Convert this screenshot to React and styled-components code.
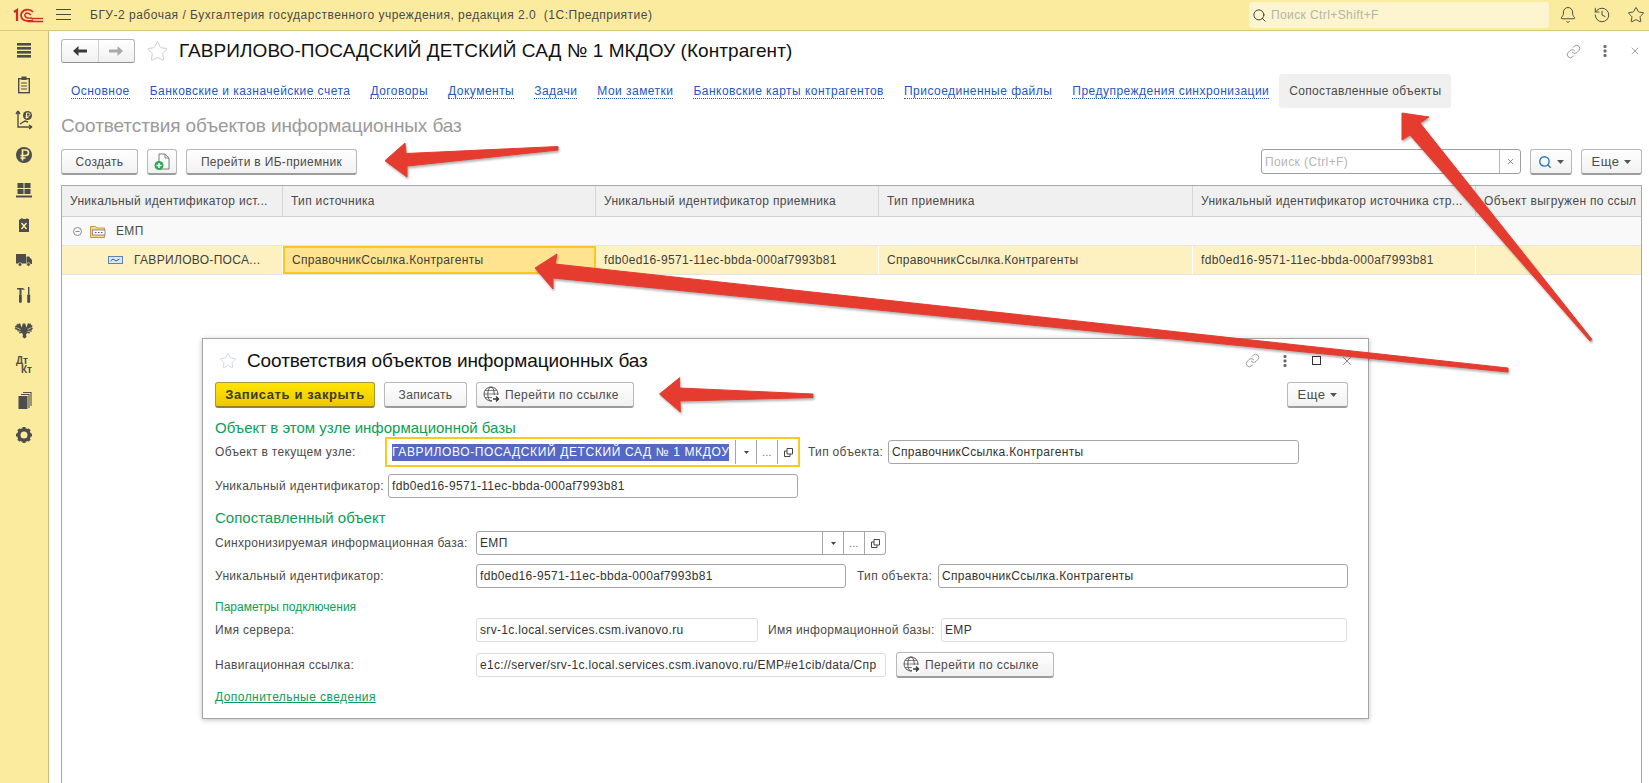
import React from 'react';
import styled, { createGlobalStyle } from 'styled-components';
import { Bell, History, Star, Link as LinkIcon, X, Search } from 'lucide-react';

const GlobalStyle = createGlobalStyle`
  html, body, #root { margin: 0; height: 100%; }
  body {
    font-family: "Liberation Sans", Arial, sans-serif;
    font-size: 12px;
    letter-spacing: 0.32px;
    color: #4b4b4b;
    background: #fff;
    overflow: hidden;
  }
  * { box-sizing: border-box; }
`;

const tabs = [
  'Основное',
  'Банковские и казначейские счета',
  'Договоры',
  'Документы',
  'Задачи',
  'Мои заметки',
  'Банковские карты контрагентов',
  'Присоединенные файлы',
  'Предупреждения синхронизации',
];

const Logo = () => (
  <svg width="30" height="15" viewBox="0 0 30 15" fill="none" stroke="#d6262b">
    <path d="M1 4 L4 2 V13" strokeWidth="2.2" />
    <path d="M20 4 C17 0.5 9 0.5 8 7 C8 13 15 14 20 12" strokeWidth="1.8" />
    <path d="M18 7 C14 3 11 6 12 8 C13 11 17 10 19 10" strokeWidth="1.4" />
    <path d="M15 13.5 H30" strokeWidth="1.6" />
    <path d="M19 10.5 H30" strokeWidth="1.4" />
  </svg>
);

const Burger = () => (
  <svg width="15" height="12" viewBox="0 0 15 12" stroke="#4a4a4a" strokeWidth="1">
    <path d="M0 .5H15M0 5.5H15M0 10.5H15" />
  </svg>
);

const SideIcon = ({ children }) => (
  <svg width="24" height="24" viewBox="0 0 24 24" fill="#4d4d4d" stroke="none">{children}</svg>
);

const DtKtIcon = () => <DtKt><span>Дт</span><span>Кт</span></DtKt>;

const sideIcons = [
  <SideIcon key="menu">
    <rect x="5" y="5" width="14" height="2.6" /><rect x="5" y="9" width="14" height="2.6" />
    <rect x="5" y="13" width="14" height="2.6" /><rect x="5" y="17" width="14" height="2.6" />
  </SideIcon>,
  <SideIcon key="clip">
    <rect x="6.7" y="5.7" width="10.6" height="14" fill="none" stroke="#4d4d4d" strokeWidth="1.4" />
    <rect x="9.5" y="3.5" width="5" height="3.5" />
    <path d="M9 10h6M9 13h6M9 16h6" stroke="#4d4d4d" strokeWidth="1.2" />
  </SideIcon>,
  <SideIcon key="chart">
    <path d="M6 3v16h14M6 3l-2 3M6 3l2 3M20 19l-3-2M20 19l-3 2M8 16l5-3 3 1" fill="none" stroke="#4d4d4d" strokeWidth="1.4" />
    <circle cx="15.5" cy="7.5" r="4.5" />
    <path d="M14.5 10.5V5h2a1.5 1.5 0 0 1 0 3h-3M13.5 9.500h3" fill="none" stroke="#fbec9f" strokeWidth="1" />
  </SideIcon>,
  <SideIcon key="rub">
    <circle cx="12" cy="12" r="8" />
    <path d="M10.5 17.5V7h3.2a2.7 2.7 0 0 1 0 5.5H8.5M8.5 15h5" fill="none" stroke="#fbec9f" strokeWidth="1.7" />
  </SideIcon>,
  <SideIcon key="grid">
    <rect x="5.5" y="5" width="6" height="5" /><rect x="12.5" y="5" width="6" height="5" />
    <rect x="5.5" y="11" width="6" height="5" /><rect x="12.5" y="11" width="6" height="5" />
    <rect x="4" y="17.5" width="16" height="2" />
  </SideIcon>,
  <SideIcon key="can">
    <path d="M7 7l3-2 1 1h3l1-1 1 1h1v13H7z" />
    <path d="M9.5 10l5 6M14.5 10l-5 6" stroke="#fbec9f" strokeWidth="1.5" />
  </SideIcon>,
  <SideIcon key="truck">
    <rect x="4" y="6" width="10" height="9.5" />
    <path d="M14.5 8.5h2.500l3 3.500v4h-5.500z" />
    <circle cx="8" cy="16.5" r="1.8" stroke="#fbec9f" strokeWidth=".6" />
    <circle cx="16.5" cy="16.5" r="1.8" stroke="#fbec9f" strokeWidth=".6" />
  </SideIcon>,
  <SideIcon key="tools">
    <path d="M5 5h6l2 2-3-.5H9.5V11h-2V6.5H5z" />
    <rect x="7" y="11" width="2.8" height="9" rx="1.4" />
    <rect x="16" y="4" width="1.4" height="7" />
    <rect x="15.2" y="11" width="3" height="9" rx="1.5" />
  </SideIcon>,
  <SideIcon key="eagle">
    <path d="M11 5l1 1 1-1 1.5 4.5L16 5l1.5 1 1-1 .5 2 1.5.5-.5 2 1 1-1.500 1.500.5 1.500-2 .5-.5 1.500-2.500-.5-1 2 .5 2-2 1.500-2-1.500.5-2-1-2-2.500.5-.5-1.500-2-.5.5-1.500L2.500 11l1-1-.5-2 1.500-.5.5-2 1 1L8 5l1.500 4.500z" />
    <path d="M4.5 9.5l4 2M4.5 13l4 .5M19.5 9.5l-4 2M19.5 13l-4 .5" stroke="#fbec9f" strokeWidth=".7" />
  </SideIcon>,
  <DtKtIcon key="dtkt" />,
  <SideIcon key="docs">
    <rect x="6.5" y="8" width="9" height="13" />
    <path d="M17 20V6.5H9M19 18V4.500H11" fill="none" stroke="#4d4d4d" strokeWidth="1.1" />
  </SideIcon>,
  <SideIcon key="gear">
    <circle cx="12" cy="12" r="5.2" fill="none" stroke="#4d4d4d" strokeWidth="3.4" />
    {[0, 45, 90, 135, 180, 225, 270, 315].map((a) => (
      <rect key={a} x="10.5" y="4" width="3" height="3" transform={`rotate(${a} 12 12)`} />
    ))}
  </SideIcon>,
];

const DotsIcon = () => (
  <svg width="4" height="12" viewBox="0 0 4 12" fill="#6b6b6b">
    <rect x=".5" y="0" width="3" height="3" rx="1" /><rect x=".5" y="4.5" width="3" height="3" rx="1" /><rect x=".5" y="9" width="3" height="3" rx="1" />
  </svg>
);

const ArrowIcon = ({ color, flip }) => (
  <svg width="14" height="10" viewBox="0 0 14 10" fill={color}>
    <path d={flip ? 'M14 5L8.500 0v3.500H0v3h8.500V10z' : 'M0 5l5.500-5v3.500H14v3H5.500V10z'} />
  </svg>
);

const AddDoc = () => (
  <svg width="16" height="18" viewBox="0 0 16 18">
    <path d="M5 1h6l4 4v11H5z" fill="#fff" stroke="#7d7d7d" />
    <path d="M11 1v4h4" fill="none" stroke="#7d7d7d" />
    <circle cx="5" cy="12.5" r="4.5" fill="#2fa84f" />
    <path d="M2.5 12.5h5M5 10v5" stroke="#fff" strokeWidth="1.4" />
  </svg>
);

const GlobeIcon = () => (
  <svg width="17" height="17" viewBox="0 0 17 17" fill="none" stroke="#555">
    <circle cx="8" cy="8" r="7" />
    <ellipse cx="8" cy="8" rx="3.2" ry="7" />
    <path d="M1 8h14M2 4.5h12M2 11.5h12" strokeWidth=".7" />
    <rect x="9" y="9" width="8" height="8" fill="#fff" stroke="none" />
    <path d="M10 13h5M13 10.5L15.5 13 13 15.5" strokeWidth="1.4" stroke="#333" />
  </svg>
);

const Caret = () => (
  <svg width="7" height="4" viewBox="0 0 7 4" fill="#555"><path d="M0 0h7L3.5 4z" /></svg>
);

const SmallCaret = () => (
  <svg width="5" height="3" viewBox="0 0 5 3" fill="#444"><path d="M0 0h5L2.5 3z" /></svg>
);

const CopyIcon = () => (
  <svg width="9" height="9" viewBox="0 0 9 9" fill="none" stroke="#444">
    <path d="M3 .5h5.500V6H3zM3 3H.5v5.500H6V6" />
  </svg>
);

const FolderIcon = () => (
  <svg width="16" height="13" viewBox="0 0 16 13">
    <path d="M.5 3V1.5h5l1.500 1.500h7.500v9.500H.5z" fill="#f7d98c" stroke="#c99a3c" />
    <rect x="2.5" y="5" width="12.5" height="5" fill="#fff" stroke="#777" strokeWidth=".8" />
    <path d="M5 7.5h1.500M8 7.5h1.500M11 7.5h1.500" stroke="#555" />
  </svg>
);

const RowIcon = () => (
  <svg width="15" height="8" viewBox="0 0 15 8" fill="none">
    <rect x=".5" y=".5" width="14" height="7" fill="#d9e6f5" stroke="#5d82ad" />
    <path d="M2.5 5l2.500-2 3 2 3.500-2" stroke="#3a5f8a" />
  </svg>
);

const CollapseIcon = () => (
  <svg width="9" height="9" viewBox="0 0 9 9" fill="none" stroke="#8a8a8a">
    <circle cx="4.5" cy="4.5" r="4" /><path d="M2.5 4.5h4" />
  </svg>
);

const ComboControls = () => (
  <>
    <ComboBtn><SmallCaret /></ComboBtn>
    <ComboBtn><DotsText>...</DotsText></ComboBtn>
    <ComboBtn><CopyIcon /></ComboBtn>
  </>
);

const App = () => (
  <Page>
    <GlobalStyle />
    <TopBar>
      <LogoBox><Logo /></LogoBox>
      <BurgerBox><Burger /></BurgerBox>
      <AppTitle>БГУ-2 рабочая / Бухгалтерия государственного учреждения, редакция 2.0  (1С:Предприятие)</AppTitle>
      <TopSearch>
        <Search size={15} color="#333" strokeWidth={1.5} />
        <TopSearchText>Поиск Ctrl+Shift+F</TopSearchText>
      </TopSearch>
      <TopIcons>
        <Bell size={18} color="#4a4a4a" strokeWidth={1.3} />
        <History size={18} color="#4a4a4a" strokeWidth={1.3} />
        <Star size={18} color="#4a4a4a" strokeWidth={1.3} />
      </TopIcons>
    </TopBar>

    <Body>
      <SideBar>
        {sideIcons.map((icon) => <SideItem key={icon.key}>{icon}</SideItem>)}
      </SideBar>

      <Main>
        <HeadRow>
          <NavGroup>
            <NavBtn><ArrowIcon color="#3a3a3a" /></NavBtn>
            <NavBtn><ArrowIcon color="#a9a9a9" flip /></NavBtn>
          </NavGroup>
          <BigStar><Star size={23} color="#c6ccd3" strokeWidth={1} /></BigStar>
          <PageTitle>ГАВРИЛОВО-ПОСАДСКИЙ ДЕТСКИЙ САД № 1 МКДОУ (Контрагент)</PageTitle>
          <HeadIcons>
            <LinkIcon size={15} color="#777" strokeWidth={1.2} />
            <DotsIcon />
            <X size={12} color="#777" strokeWidth={1.3} />
          </HeadIcons>
        </HeadRow>

        <Tabs>
          {tabs.map((t) => <Tab key={t}><TabLink>{t}</TabLink></Tab>)}
          <ActiveTab>Сопоставленные объекты</ActiveTab>
        </Tabs>

        <SectionTitle>Соответствия объектов информационных баз</SectionTitle>

        <Toolbar>
          <Button $w={77}>Создать</Button>
          <Button $w={30}><AddDoc /></Button>
          <Button $w={171}>Перейти в ИБ-приемник</Button>
          <SearchBox>
            <SearchPlaceholder>Поиск (Ctrl+F)</SearchPlaceholder>
            <SearchClear><X size={9} color="#555" strokeWidth={1.8} /></SearchClear>
          </SearchBox>
          <Button $w={42}><Search size={14} color="#2b78b8" strokeWidth={2.4} /><Caret /></Button>
          <Button $w={61}><MoreText>Еще</MoreText><Caret /></Button>
        </Toolbar>

        <Table>
          <HeaderRow>
            <HeadCell>Уникальный идентификатор ист...</HeadCell>
            <HeadCell>Тип источника</HeadCell>
            <HeadCell>Уникальный идентификатор приемника</HeadCell>
            <HeadCell>Тип приемника</HeadCell>
            <HeadCell>Уникальный идентификатор источника стр...</HeadCell>
            <HeadCell>Объект выгружен по ссыл</HeadCell>
          </HeaderRow>
          <GroupRow>
            <CollapseIcon />
            <FolderIcon />
            <span>ЕМП</span>
          </GroupRow>
          <DataRow>
            <Cell $indent><RowIcon /><span>ГАВРИЛОВО-ПОСА...</span></Cell>
            <FocusCell>СправочникСсылка.Контрагенты</FocusCell>
            <Cell>fdb0ed16-9571-11ec-bbda-000af7993b81</Cell>
            <Cell>СправочникСсылка.Контрагенты</Cell>
            <Cell>fdb0ed16-9571-11ec-bbda-000af7993b81</Cell>
            <Cell />
          </DataRow>
        </Table>
      </Main>
    </Body>

    <Dialog>
      <DialogHead>
        <Star size={18} color="#c6ccd3" strokeWidth={1} />
        <DialogTitle>Соответствия объектов информационных баз</DialogTitle>
        <DialogIcons>
          <LinkIcon size={15} color="#777" strokeWidth={1.2} />
          <DotsIcon />
          <MaxBox />
          <X size={14} color="#555" strokeWidth={1.2} />
        </DialogIcons>
      </DialogHead>
      <DialogBar>
        <PrimaryButton>Записать и закрыть</PrimaryButton>
        <Button $w={83}>Записать</Button>
        <LinkButton><GlobeIcon />Перейти по ссылке</LinkButton>
        <Spring />
        <Button $w={61}><MoreText>Еще</MoreText><Caret /></Button>
      </DialogBar>

      <GroupTitle $mt={10}>Объект в этом узле информационной базы</GroupTitle>
      <FormRow $h={30}>
        <Label $w={170}>Объект в текущем узле:</Label>
        <FocusField>
          <SelectedWrap><Selected>ГАВРИЛОВО-ПОСАДСКИЙ ДЕТСКИЙ САД № 1 МКДОУ</Selected></SelectedWrap>
          <ComboControls />
        </FocusField>
        <Label $w={80} $ml={8}>Тип объекта:</Label>
        <Field $w={411}>СправочникСсылка.Контрагенты</Field>
      </FormRow>
      <FormRow $mt={7}>
        <Label $w={173}>Уникальный идентификатор:</Label>
        <Field $w={410}>fdb0ed16-9571-11ec-bbda-000af7993b81</Field>
      </FormRow>

      <GroupTitle $mt={10} $h={20}>Сопоставленный объект</GroupTitle>
      <FormRow $mt={3}>
        <Label $w={261}>Синхронизируемая информационная база:</Label>
        <Field $w={410} $combo>
          <ComboText>ЕМП</ComboText>
          <ComboControls />
        </Field>
      </FormRow>
      <FormRow $mt={9}>
        <Label $w={261}>Уникальный идентификатор:</Label>
        <Field $w={370}>fdb0ed16-9571-11ec-bbda-000af7993b81</Field>
        <Label $w={81} $ml={11}>Тип объекта:</Label>
        <Field $w={410}>СправочникСсылка.Контрагенты</Field>
      </FormRow>

      <SubTitle>Параметры подключения</SubTitle>
      <FormRow $mt={1}>
        <Label $w={261}>Имя сервера:</Label>
        <Field $w={282} $light>srv-1c.local.services.csm.ivanovo.ru</Field>
        <Label $w={173} $ml={10}>Имя информационной базы:</Label>
        <Field $w={406} $light>EMP</Field>
      </FormRow>
      <FormRow $mt={11}>
        <Label $w={261}>Навигационная ссылка:</Label>
        <Field $w={410} $light>e1c://server/srv-1c.local.services.csm.ivanovo.ru/EMP#e1cib/data/Спр</Field>
        <LinkButton $ml={10}><GlobeIcon />Перейти по ссылке</LinkButton>
      </FormRow>
      <MoreLink>Дополнительные сведения</MoreLink>
    </Dialog>

    <Arrows width="1649" height="783" viewBox="0 0 1649 783">
      <polygon points="385,160.7 405,143 406,153.5 558,146.5 558,150 407,166 407,177" />
      <polygon points="1402,113 1429,117 1420,123 1592,339.5 1590,341 1410,135 1402,140" />
      <polygon points="535,268 557,254 555,264 1508,368 1508,372 553,278 553,289" />
      <polygon points="659.5,394 679.6,377.7 679.6,388 813,394 813,397.5 680,401 680.4,412" />
    </Arrows>
  </Page>
);

const Page = styled.div`
  position: relative;
  width: 1649px;
  height: 783px;
  display: flex;
  flex-direction: column;
  overflow: hidden;
`;

const TopBar = styled.div`
  height: 31px;
  flex: none;
  display: flex;
  align-items: center;
  background: #fbeb9e;
  border-bottom: 1px solid #d8c878;
`;

const LogoBox = styled.div`
  margin-left: 13px;
  width: 43px;
  display: flex;
`;

const BurgerBox = styled.div`
  width: 34px;
  display: flex;
`;

const AppTitle = styled.div`
  width: 1159px;
  color: #4a4a4a;
  letter-spacing: 0.5px;
  white-space: pre;
`;

const TopSearch = styled.div`
  width: 300px;
  height: 26px;
  padding-left: 3px;
  display: flex;
  align-items: center;
  gap: 4px;
  background: #fdf5cf;
  border-radius: 3px;
`;

const TopSearchText = styled.span`
  color: #b4b3a6;
  letter-spacing: 0.4px;
`;

const TopIcons = styled.div`
  margin-left: 10px;
  display: flex;
  gap: 16px;
`;

const Body = styled.div`
  flex: 1;
  display: flex;
  min-height: 0;
`;

const SideBar = styled.div`
  width: 49px;
  flex: none;
  padding-top: 1px;
  display: flex;
  flex-direction: column;
  background: #fbeb9e;
  border-right: 1px solid #cdbd7c;
`;

const SideItem = styled.div`
  height: 35px;
  flex: none;
  display: flex;
  align-items: center;
  justify-content: center;
`;

const DtKt = styled.div`
  display: flex;
  flex-direction: column;
  font-size: 10px;
  font-weight: 700;
  line-height: 9px;
  letter-spacing: 0;
  color: #4d4d4d;
  span:last-child { margin-left: 5px; }
`;

const Main = styled.div`
  flex: 1;
  min-width: 0;
  padding: 8px 7px 0 12px;
  display: flex;
  flex-direction: column;
`;

const HeadRow = styled.div`
  height: 24px;
  flex: none;
  display: flex;
  align-items: center;
`;

const NavGroup = styled.div`
  width: 74px;
  height: 24px;
  display: flex;
  background: linear-gradient(#ffffff, #f0f0f0);
  border: 1px solid #b5b5b5;
  border-bottom-color: #8f8f8f;
  border-radius: 3px;
`;

const NavBtn = styled.div`
  flex: 1;
  display: flex;
  align-items: center;
  justify-content: center;
  & + & { border-left: 1px solid #cfcfcf; }
`;

const BigStar = styled.div`
  margin-left: 11px;
  width: 33px;
  display: flex;
`;

const PageTitle = styled.div`
  font-size: 19px;
  letter-spacing: 0.07px;
  color: #111;
  white-space: nowrap;
`;

const HeadIcons = styled.div`
  margin-left: auto;
  margin-right: 1px;
  display: flex;
  align-items: center;
  gap: 22px;
`;

const Tabs = styled.div`
  height: 34px;
  margin-top: 11px;
  flex: none;
  display: flex;
`;

const Tab = styled.div`
  padding: 0 10px;
  display: flex;
  align-items: center;
  white-space: nowrap;
`;

const TabLink = styled.span`
  color: #2457c5;
  border-bottom: 1px dotted #2457c5;
  line-height: 14px;
  letter-spacing: 0.47px;
`;

const ActiveTab = styled(Tab)`
  background: #f0f0f0;
  border-radius: 3px;
  color: #4b4b4b;
`;

const SectionTitle = styled.div`
  height: 22px;
  margin-top: 7px;
  flex: none;
  font-size: 19px;
  letter-spacing: -0.1px;
  line-height: 22px;
  color: #9a9a9a;
  white-space: nowrap;
`;

const Toolbar = styled.div`
  height: 26px;
  margin-top: 12px;
  flex: none;
  display: flex;
  gap: 9px;
`;

const Button = styled.div`
  width: ${(p) => p.$w}px;
  height: 26px;
  flex: none;
  display: flex;
  align-items: center;
  justify-content: center;
  gap: 5px;
  background: linear-gradient(#ffffff, #f1f1f1);
  border: 1px solid #b9b9b9;
  border-bottom: 2px solid #9c9c9c;
  border-radius: 3px;
  color: #4b4b4b;
  white-space: nowrap;
`;

const LinkButton = styled(Button)`
  width: 158px;
  margin-left: ${(p) => p.$ml || 0}px;
  padding-left: 6px;
  justify-content: flex-start;
  letter-spacing: 0.4px;
`;

const MoreText = styled.span`
  font-size: 13px;
  letter-spacing: 0.5px;
`;

const PrimaryButton = styled(Button)`
  width: 160px;
  background: linear-gradient(#ffe600, #efc800);
  border-color: #a89a3c;
  border-bottom-color: #8f8230;
  color: #3c3c1e;
  font-size: 13px;
  font-weight: 700;
  letter-spacing: 0.6px;
`;

const SearchBox = styled.div`
  width: 260px;
  height: 25px;
  margin-left: auto;
  display: flex;
  background: #fff;
  border: 1px solid #9f9f9f;
  border-radius: 3px;
`;

const SearchPlaceholder = styled.div`
  flex: 1;
  padding-left: 3px;
  display: flex;
  align-items: center;
  color: #b5b5b5;
  letter-spacing: 0.4px;
`;

const SearchClear = styled.div`
  width: 21px;
  display: flex;
  align-items: center;
  justify-content: center;
  border-left: 1px solid #b5b5b5;
`;

const Table = styled.div`
  flex: 1;
  margin-top: 10px;
  border: 1px solid #a8a8a8;
  border-bottom: none;
  overflow: hidden;
`;

const columns = '221px 313px 283px 314px 283px 1fr';

const HeaderRow = styled.div`
  height: 31px;
  display: grid;
  grid-template-columns: ${columns};
  background: #f0f0f0;
  border-bottom: 1px solid #d0d0d0;
`;

const HeadCell = styled.div`
  padding-left: 8px;
  display: flex;
  align-items: center;
  overflow: hidden;
  white-space: nowrap;
  border-right: 1px solid #d6d6d6;
  &:last-child { border-right: none; }
`;

const GroupRow = styled.div`
  height: 29px;
  padding-left: 11px;
  display: flex;
  align-items: center;
  gap: 8px;
  background: #f9f9f9;
  border-bottom: 1px solid #e4e4e4;
  span { margin-left: 2px; }
`;

const DataRow = styled.div`
  height: 29px;
  display: grid;
  grid-template-columns: ${columns};
  background: #fdf1c1;
  border-bottom: 1px solid #e4e4e4;
`;

const Cell = styled.div`
  padding-left: ${(p) => (p.$indent ? 46 : 8)}px;
  display: flex;
  align-items: center;
  gap: 11px;
  color: #3f3f3f;
  white-space: nowrap;
  overflow: hidden;
  border-right: 1px solid #fff;
  &:last-child { border-right: none; }
`;

const FocusCell = styled(Cell)`
  padding-left: 7px;
  background: #ffe38e;
  border: 2px solid #fcc820;
`;

const Dialog = styled.div`
  position: absolute;
  left: 202px;
  top: 338px;
  width: 1167px;
  height: 381px;
  padding: 0 20px 0 12px;
  background: #fff;
  border: 1px solid #a5a5a5;
  box-shadow: 0 1px 5px rgba(0, 0, 0, 0.25);
`;

const DialogHead = styled.div`
  height: 43px;
  padding-left: 4px;
  display: flex;
  align-items: center;
`;

const DialogTitle = styled.div`
  margin-left: 10px;
  font-size: 19px;
  letter-spacing: -0.1px;
  color: #111;
  white-space: nowrap;
`;

const DialogIcons = styled.div`
  margin-left: auto;
  margin-right: -6px;
  display: flex;
  align-items: center;
  gap: 19px;
  svg:nth-child(2) { margin-left: 4px; }
`;

const MaxBox = styled.div`
  width: 9px;
  height: 9px;
  margin-left: 6px;
  border: 1px solid #333;
`;

const DialogBar = styled.div`
  height: 26px;
  display: flex;
  gap: 9px;
`;

const Spring = styled.div`
  flex: 1;
`;

const GroupTitle = styled.div`
  height: ${(p) => p.$h || 19}px;
  margin-top: ${(p) => p.$mt}px;
  font-size: 15px;
  line-height: 19px;
  letter-spacing: 0;
  color: #0aa055;
  white-space: nowrap;
`;

const SubTitle = styled.div`
  height: 20px;
  margin-top: 9px;
  line-height: 20px;
  letter-spacing: 0;
  color: #0aa055;
`;

const FormRow = styled.div`
  height: ${(p) => p.$h || 24}px;
  margin-top: ${(p) => p.$mt || 0}px;
  display: flex;
  align-items: center;
`;

const Label = styled.div`
  width: ${(p) => p.$w}px;
  margin-left: ${(p) => p.$ml || 0}px;
  flex: none;
  color: #4b4b4b;
  white-space: nowrap;
`;

const Field = styled.div`
  width: ${(p) => p.$w}px;
  height: 24px;
  flex: none;
  padding-left: ${(p) => (p.$combo ? 0 : 3)}px;
  display: flex;
  align-items: center;
  background: #fff;
  border: 1px solid ${(p) => (p.$light ? '#dcdcdc' : '#a6a6a6')};
  border-radius: 3px;
  color: #333;
  white-space: nowrap;
  overflow: hidden;
`;

const ComboText = styled.div`
  flex: 1;
  padding-left: 3px;
`;

const ComboBtn = styled.div`
  width: 21px;
  height: 100%;
  flex: none;
  display: flex;
  align-items: center;
  justify-content: center;
  border-left: 1px solid #a6a6a6;
`;

const DotsText = styled.span`
  color: #666;
  font-size: 10px;
`;

const FocusField = styled.div`
  width: 415px;
  height: 30px;
  flex: none;
  display: flex;
  align-items: center;
  border: 2px solid #fcc820;
  ${ComboBtn} { height: 24px; }
`;

const SelectedWrap = styled.div`
  width: 348px;
  padding-left: 5px;
  overflow: hidden;
  white-space: nowrap;
`;

const Selected = styled.span`
  background: #5468c4;
  color: #fff;
  line-height: 17px;
  letter-spacing: 0.63px;
  display: inline-block;
`;

const MoreLink = styled.div`
  margin-top: 12px;
  color: #0a9d58;
  text-decoration: underline;
  line-height: 16px;
  letter-spacing: 0.45px;
`;

const Arrows = styled.svg`
  position: absolute;
  left: 0;
  top: 0;
  pointer-events: none;
  fill: #e53c2f;
  stroke: #e53c2f;
  stroke-linejoin: round;
  filter: drop-shadow(1px 2px 1px rgba(0, 0, 0, 0.3));
`;

export default App;
